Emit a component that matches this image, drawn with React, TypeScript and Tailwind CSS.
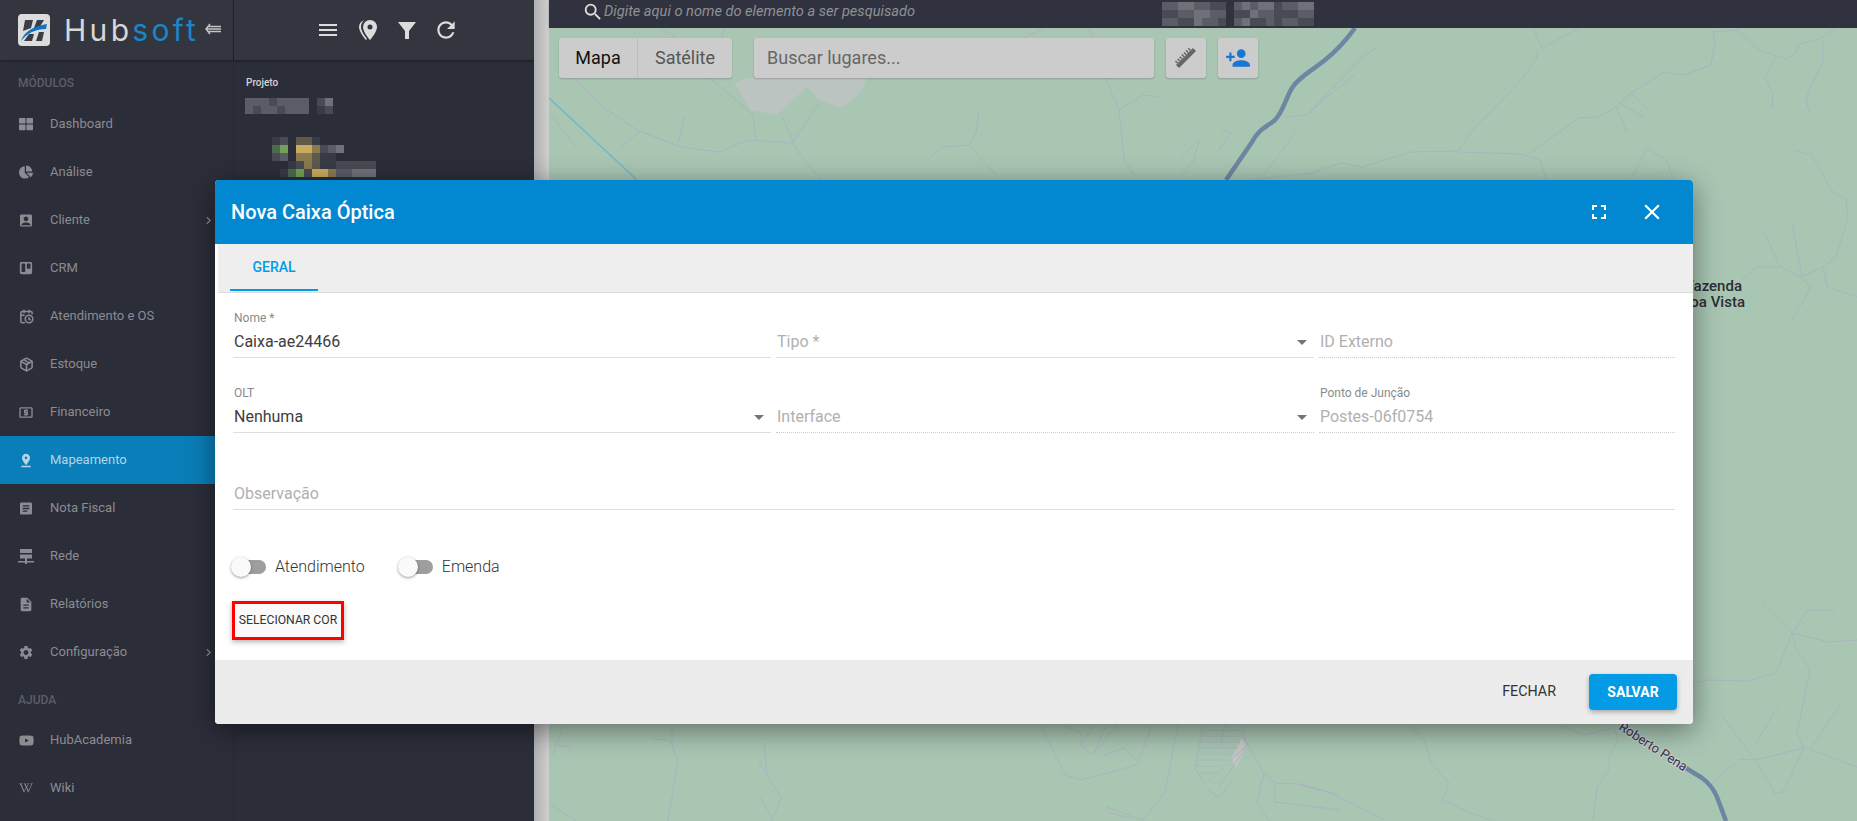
import type { ReactNode } from 'react';
import {
  FaChartPie,
  FaThLarge,
  FaTrello,
  FaWikipediaW,
  FaYoutube,
} from 'react-icons/fa';
import {
  MdAccountBox,
  MdArticle,
  MdChevronRight,
  MdClose,
  MdDescription,
  MdFullscreen,
  MdLocalAtm,
  MdPersonAdd,
  MdPinDrop,
  MdSearch,
  MdSettings,
} from 'react-icons/md';
import { CalendarClock, Package } from 'lucide-react';

const PALETTE: Record<string, string> = {
  '1': '#383a45',
  '2': '#484a54',
  '3': '#5a5c66',
  '4': '#6f7179',
  g: '#6fa254',
  d: '#4d6a50',
  y: '#c9ab5f',
  b: '#8a7a50',
  c: '#5e5a4c',
};

function Mosaic({ rows, cell = 8, className }: { rows: string[]; cell?: number; className?: string }) {
  return (
    <svg width={rows[0].length * cell} height={rows.length * cell} className={className}>
      {rows.map((row, y) =>
        row.split('').map((c, x) =>
          c === '.' ? null : (
            <rect key={`${x}-${y}`} x={x * cell} y={y * cell} width={cell} height={cell} fill={PALETTE[c]} />
          ),
        ),
      )}
    </svg>
  );
}

function RedeIcon() {
  return (
    <svg viewBox="0 0 16 16" className="h-4 w-4" fill="currentColor">
      <path d="M2 1h12v4H2zM2 6.5h12v4H2zM7 10.5h2V13h7v1.5H9V16H7v-1.5H0V13h7z" />
    </svg>
  );
}

const MODULES: { label: string; icon: ReactNode; arrow?: boolean; active?: boolean }[] = [
  { label: 'Dashboard', icon: <FaThLarge size={14} /> },
  { label: 'Análise', icon: <FaChartPie size={14} /> },
  { label: 'Cliente', icon: <MdAccountBox size={17} />, arrow: true },
  { label: 'CRM', icon: <FaTrello size={14} /> },
  { label: 'Atendimento e OS', icon: <CalendarClock size={15} strokeWidth={2.5} /> },
  { label: 'Estoque', icon: <Package size={15} strokeWidth={2.5} /> },
  { label: 'Financeiro', icon: <MdLocalAtm size={17} /> },
  { label: 'Mapeamento', icon: <MdPinDrop size={19} />, active: true },
  { label: 'Nota Fiscal', icon: <MdArticle size={19} /> },
  { label: 'Rede', icon: <RedeIcon /> },
  { label: 'Relatórios', icon: <MdDescription size={17} /> },
  { label: 'Configuração', icon: <MdSettings size={17} />, arrow: true },
];

const HELP = [
  { label: 'HubAcademia', icon: <FaYoutube size={15} /> },
  { label: 'Wiki', icon: <FaWikipediaW size={14} /> },
];

function NavItem({ label, icon, arrow, active }: { label: string; icon: ReactNode; arrow?: boolean; active?: boolean }) {
  return (
    <div
      className={`flex h-12 items-center pl-[18px] text-[13px] ${
        active ? 'bg-[#0a7eb8] text-[#b5d5e6]' : 'text-[#8b8c92]'
      }`}
    >
      <span className="flex w-4 justify-center">{icon}</span>
      <span className="ml-4 flex-1">{label}</span>
      {arrow && <MdChevronRight size={15} className="mr-[17px]" />}
    </div>
  );
}

function Sidebar() {
  return (
    <aside className="flex w-[234px] shrink-0 flex-col border-r border-[#272933] bg-[#2b2d39]">
      <div className="flex h-[60px] shrink-0 items-center bg-[#33363f] pl-[18px] shadow-[0_1px_2px_rgba(0,0,0,0.4)]">
        <svg viewBox="0 0 32 32" className="h-8 w-8 shrink-0">
          <rect width="32" height="32" rx="4" fill="#dcdcdc" />
          <path d="M7 6h8l-2 8-8 3zM19 6h7l-5 8h-5zM11 20h5l-2 7H6zM21 18h5l-2 9h-6z" fill="#3a3d45" />
          <path d="M3 27c3-9 12-15 26-17l-1 5C18 15 9 19 3 27z" fill="#1272c4" />
        </svg>
        <div className="ml-[14px] text-[30px] leading-none font-normal tracking-[0.11em] [font-family:Inter,sans-serif]">
          <span className="text-[#d7d7d7]">Hub</span>
          <span className="text-[#1a86c7]">soft</span>
        </div>
        <svg viewBox="0 0 16 12" className="absolute left-[205px] top-[23px] h-3 w-4" fill="none" stroke="#c4c4c4" strokeWidth="1.5">
          <path d="M5 1 1 6l4 5M3 3.5h13M2 6h14M3 8.5h13" />
        </svg>
      </div>
      <div className="flex h-10 items-center pt-[6px] pl-[18px] text-xs font-medium text-[#5b5d66]">MÓDULOS</div>
      {MODULES.map((m) => (
        <NavItem key={m.label} {...m} />
      ))}
      <div className="flex h-10 items-center pt-[8px] pl-[18px] text-xs font-medium text-[#5b5d66]">AJUDA</div>
      {HELP.map((m) => (
        <NavItem key={m.label} {...m} />
      ))}
    </aside>
  );
}

function ProjectPanel() {
  return (
    <section className="flex w-[300px] shrink-0 flex-col bg-[#2b2d39]">
      <div className="flex h-[60px] shrink-0 items-center bg-[#33363f] shadow-[0_1px_2px_rgba(0,0,0,0.4)]">
        <svg viewBox="0 0 24 24" className="ml-[82px] h-6 w-6" fill="#dcdcdc">
          <path d="M3 18h18v-2H3v2zm0-5h18v-2H3v2zm0-7v2h18V6H3z" />
        </svg>
        <svg viewBox="0 0 24 24" className="ml-[16px] h-6 w-6" fill="#dcdcdc">
          <path d="M14,11.5A2.5,2.5 0 0,0 16.5,9A2.5,2.5 0 0,0 14,6.5A2.5,2.5 0 0,0 11.5,9A2.5,2.5 0 0,0 14,11.5M14,2C17.86,2 21,5.13 21,9C21,14.25 14,22 14,22C14,22 7,14.25 7,9A7,7 0 0,1 14,2M5,9C5,13.5 10.08,19.66 11,20.81L10,22C10,22 3,14.25 3,9C3,5.83 5.11,3.15 8,2.29C6.16,3.94 5,6.33 5,9Z" />
        </svg>
        <svg viewBox="0 0 24 24" className="ml-[15px] h-6 w-6" fill="#dcdcdc">
          <path d="M3 4h18l-7 9v8h-4v-8z" />
        </svg>
        <svg viewBox="0 0 24 24" className="ml-[14px] h-[26px] w-[26px]" fill="#dcdcdc">
          <path d="M17.65 6.35C16.2 4.9 14.21 4 12 4c-4.42 0-7.99 3.58-7.99 8s3.57 8 7.99 8c3.73 0 6.84-2.55 7.73-6h-2.08c-.82 2.33-3.04 4-5.65 4-3.31 0-6-2.69-6-6s2.69-6 6-6c1.66 0 3.14.69 4.22 1.78L13 11h7V4l-2.35 2.35z" />
        </svg>
      </div>
      <div className="pt-4 pl-[12px]">
        <div className="text-[10px] leading-[14px] font-medium text-[#d4d4d6]">Projeto</div>
        <Mosaic className="mt-2 -ml-px" cell={8} rows={['33323333.24', '32332333.12']} />
        <Mosaic
          className="mt-[23px] ml-[18px]"
          rows={['.12.cc1.......', '.dg.yyb234....', '.23.bbc11.....', '...12bc1122222', '..1dg2yyb33444']}
        />
      </div>
    </section>
  );
}

const THIN_ROADS = [
  '1533,28 1542,48 1579,28',
  '1538,50 1536,60 1521,80 1490,113 1475,127 1459,150',
  '1459,152 1521,154 1540,160 1546,180',
  '1529,154 1579,118 1598,117 1616,107 1631,93 1664,72 1684,75 1711,65 1715,43 1713,32 1738,30 1759,50 1786,59 1796,53 1798,45 1821,38 1835,28',
  '1776,57 1765,77 1773,93 1772,108',
  '1823,40 1823,60 1806,98 1809,112',
  '1250,180 1312,173 1341,163 1362,167 1411,152 1459,151',
  '1616,107 1627,132',
  '1620,103 1645,118',
  '1631,93 1650,112',
  '1262,177 1296,132',
  '1285,117 1307,115 1327,97 1355,75',
  '1307,115 1362,57 1376,48',
  '1647,148 1631,180',
  '1647,148 1666,160 1674,180',
  '1794,150 1811,155 1819,167 1831,190 1846,200 1848,217 1836,257 1823,267 1800,277 1780,267 1757,267 1738,283',
  '1763,230 1780,267',
  '1792,223 1802,277',
  '1800,277 1811,287 1792,320',
  '1823,267 1827,287 1857,297',
  '1762,603 1792,633 1797,650 1810,670 1797,733 1804,747 1857,767',
  '1792,633 1808,610 1836,610',
  '1792,633 1829,642 1857,640',
  '1792,633 1776,673 1748,681 1708,680 1693,683',
  '1804,748 1755,760 1740,759 1712,783',
  '1755,760 1723,717',
  '1755,760 1772,787 1774,793 1783,792 1804,748',
  '1756,743 1778,707',
  '1811,748 1842,702',
  '1614,727 1618,740 1609,757 1609,770 1597,787 1593,820',
  '1558,725 1584,735 1613,728',
  '1410,725 1424,740 1431,763 1449,783 1442,800 1470,813 1492,820',
  '1300,785 1328,792 1371,813 1385,820',
  '574,78 603,107 637,130 681,147 719,152 748,140 792,143 804,160 821,180',
  '710,78 753,115 756,140',
  '819,103 792,143',
  '782,117 794,143',
  '1105,78 1119,110 1124,160 1136,177',
  '1119,110 1143,95 1158,97',
  '979,110 976,133 969,145 942,147 930,157',
  '969,145 998,177',
  '1180,157 1199,140 1194,160 1180,177',
  '639,132 620,148',
  '685,117 678,143',
  '550,113 576,147',
  '659,28 676,37',
  '724,28 722,37',
  '1044,28 1025,37',
  '1088,28 1093,37',
  '1221,130 1231,133 1219,150',
  '672,724 672,745 678,762 668,821',
  '653,739 668,740 672,745',
  '764,743 767,775 781,798 772,821',
  '760,797 772,818',
  '759,765 764,758',
  '759,765 767,774',
  '555,745 571,747 567,755',
  '563,725 553,755',
  '550,804 576,821',
  '1040,725 1065,775 1081,780 1111,772 1137,765 1152,725',
  '1060,724 1081,733 1081,745 1091,754 1099,748 1117,724',
  '1094,725 1081,745',
  '1106,725 1094,753',
  '1104,755 1124,748 1137,760',
  '1178,724 1165,792 1142,821',
  '1107,807 1142,820',
  '1107,807 1107,812 1130,818',
  '1203,725 1195,768 1205,785 1247,745 1242,725',
  '1201,730 1243,730',
  '1200,736 1241,736',
  '1199,742 1240,742',
  '1198,748 1238,748',
  '1197,754 1234,754',
  '1196,760 1228,760',
  '1195,766 1222,766',
  '1196,773 1217,773',
  '1226,724 1220,745',
  '1242,735 1264,773 1275,783 1300,784 1340,795',
  '1264,773 1257,803 1270,821',
  '1275,783 1275,802 1340,810',
  '1231,783 1219,798 1208,790',
  '1246,747 1219,787',
];

function MapDrawing() {
  return (
    <svg viewBox="549 28 1308 793" className="absolute inset-0 h-full w-full" fill="none">
      <path d="M734 83 745 78H867L860 93 841 108 819 100 807 87 777 115 750 110Z" fill="#bcc4c1" />
      <path d="M1242 738 1231 758 1236 767 1247 747Z" fill="#c3c7c6" />
      <polyline points="549,98 637,180" stroke="#72b6cb" strokeWidth="1.5" />
      {THIN_ROADS.map((points) => (
        <polyline key={points} points={points} stroke="#aab4bf" strokeWidth="1" />
      ))}
      <path
        d="M1355 28C1345 42 1335 52 1325 60C1310 72 1298 78 1292 88C1285 100 1283 112 1275 120C1265 128 1258 130 1252 142L1226 180"
        stroke="#6f86a3"
        strokeWidth="4.5"
      />
      <path d="M1678 763L1702 778Q1712 785 1717 797L1726 821" stroke="#6f86a3" strokeWidth="4.5" />
      <text
        x="1618"
        y="729"
        transform="rotate(33 1618 729)"
        fontSize="13"
        fontFamily="Roboto"
        fill="#32344a"
        stroke="#c8cfd2"
        strokeWidth="2"
        paintOrder="stroke"
      >
        Roberto Pena
      </text>
      <text fontSize="15" fontFamily="Roboto" fontWeight="500" fill="#2d2d35" textAnchor="end">
        <tspan x="1742" y="291">Fazenda</tspan>
        <tspan x="1745" y="307">Boa Vista</tspan>
      </text>
    </svg>
  );
}

function RulerIcon() {
  return (
    <svg viewBox="0 0 24 24" className="h-6 w-6" fill="none" stroke="#666">
      <path d="M3.5 20.5 20.5 3.5" strokeWidth="4.5" />
      <path d="M2 16.5 16.5 2" strokeWidth="3" strokeDasharray="1.5 1.5" />
    </svg>
  );
}

function MapArea() {
  return (
    <div className="flex min-w-0 flex-1">
      <div className="w-[15px] shrink-0 bg-gradient-to-r from-[#b0b0b0] to-[#cfcfcf]" />
      <main className="flex min-w-0 flex-1 flex-col">
        <div className="flex h-7 shrink-0 items-center bg-[#30333f] pl-[33px] shadow-[0_1px_2px_rgba(0,0,0,0.3)]">
          <MdSearch size={22} className="-mt-1 text-[#dcdcdc]" />
          <span className="-mt-1 text-[14.6px] text-[#8e9096] italic">Digite aqui o nome do elemento a ser pesquisado</span>
          <Mosaic className="ml-[247px]" cell={8} rows={['33443322.3434423344..', '22334433.2243322233..', '33224332.3422323322..']} />
        </div>
        <div className="relative flex-1 bg-[#a9c6b3]">
          <MapDrawing />
          <div className="relative flex items-start pt-[10px] pl-[10px]">
            <div className="flex h-10 w-[173px] rounded-[3px] bg-[#cccccc] text-lg shadow-[0_1px_2px_rgba(0,0,0,0.2)]">
              <div className="flex w-[79px] items-center justify-center border-r border-[#bdbdbd] text-[#111]">Mapa</div>
              <div className="flex flex-1 items-center justify-center text-[#555]">Satélite</div>
            </div>
            <div className="ml-[22px] flex h-10 w-[400px] items-center rounded-[3px] bg-[#cccccc] pl-[13px] text-lg text-[#666] shadow-[0_1px_2px_rgba(0,0,0,0.2)]">
              Buscar lugares...
            </div>
            <div className="ml-3 flex h-10 w-10 items-center justify-center rounded-[3px] bg-[#cccccc] shadow-[0_1px_2px_rgba(0,0,0,0.2)]">
              <RulerIcon />
            </div>
            <div className="ml-3 flex h-10 w-10 items-center justify-center rounded-[3px] bg-[#cccccc] text-[#1976d2] shadow-[0_1px_2px_rgba(0,0,0,0.2)]">
              <MdPersonAdd size={26} />
            </div>
          </div>
        </div>
      </main>
    </div>
  );
}

function Field({
  label,
  value,
  placeholder,
  select,
  dotted,
  className = '',
}: {
  label?: string;
  value?: string;
  placeholder?: string;
  select?: boolean;
  dotted?: boolean;
  className?: string;
}) {
  return (
    <div className={className}>
      <div className="h-4 pt-px pl-px text-xs leading-4 text-[#8a8a8a]">{label}</div>
      <div
        className={`flex h-[33px] items-center border-b pt-[2px] pr-[7px] pl-px text-base ${
          dotted ? 'border-dotted border-[#ccc]' : 'border-[#ddd]'
        }`}
      >
        <span className={`flex-1 ${value && !dotted ? 'text-[#3d3d3d]' : 'text-[#b0b0b0]'}`}>{value ?? placeholder}</span>
        {select && <span className="h-0 w-0 border-x-[5px] border-t-[5px] border-x-transparent border-t-[#757575]" />}
      </div>
    </div>
  );
}

function Toggle({ label }: { label: string }) {
  return (
    <div className="flex items-center">
      <div className="relative h-5 w-[35px]">
        <div className="absolute top-[3px] left-[6px] h-[14px] w-[29px] rounded-full bg-[#9e9e9e]" />
        <div className="absolute top-0 left-0 h-5 w-5 rounded-full bg-[#fafafa] shadow-[0_1px_3px_rgba(0,0,0,0.4)]" />
      </div>
      <span className="ml-[9px] text-base font-light text-[#333]">{label}</span>
    </div>
  );
}

function Modal() {
  return (
    <div className="absolute top-[180px] left-[215px] flex h-[544px] w-[1478px] flex-col rounded-[4px] bg-white shadow-[0_6px_28px_rgba(0,0,0,0.45)]">
      <div className="flex h-16 shrink-0 items-center rounded-t-[4px] bg-[#0288d1] pl-4 text-white">
        <h1 className="flex-1 text-xl font-medium">Nova Caixa Óptica</h1>
        <MdFullscreen size={24} className="mr-[28px]" />
        <MdClose size={26} className="mr-[28px]" />
      </div>
      <div className="ml-[3px] flex h-[49px] shrink-0 border-b border-[#ddd] bg-[#eeeeee]">
        <div className="ml-3 flex h-[47px] w-[88px] items-center justify-center border-b-2 border-[#039be5] text-sm font-medium text-[#039be5]">
          GERAL
        </div>
      </div>
      <div className="flex-1 pt-4 pr-[18px] pl-[18px]">
        <div className="grid grid-cols-[538px_538px_1fr] gap-x-[5px] gap-y-[26px]">
          <Field label="Nome *" value="Caixa-ae24466" />
          <Field placeholder="Tipo *" select />
          <Field placeholder="ID Externo" dotted />
          <Field label="OLT" value="Nenhuma" select />
          <Field placeholder="Interface" select dotted />
          <Field label="Ponto de Junção" value="Postes-06f0754" dotted />
          <Field placeholder="Observação" className="col-span-3 mt-[2px]" />
        </div>
        <div className="mt-[45px] -ml-[2px] flex gap-[33px]">
          <Toggle label="Atendimento" />
          <Toggle label="Emenda" />
        </div>
        <button className="mt-[22px] -ml-px flex h-[39px] w-[112px] items-center justify-center border-[3px] border-[#ff0000] bg-[#fafafa] text-[12.2px] text-[#333] shadow-[0_2px_5px_rgba(0,0,0,0.3)]">
          SELECIONAR COR
        </button>
      </div>
      <div className="flex h-16 shrink-0 items-center justify-end rounded-b-[4px] bg-[#ececec] pr-[16px]">
        <button className="text-[14.3px] text-[#333]">FECHAR</button>
        <button className="ml-[33px] h-9 w-[88px] rounded-[4px] bg-[#039be5] text-sm font-bold text-white shadow-[0_2px_5px_rgba(0,0,0,0.3)]">
          SALVAR
        </button>
      </div>
    </div>
  );
}

export default function App() {
  return (
    <div className="relative flex h-[821px] w-full overflow-hidden [font-family:Roboto,sans-serif]">
      <Sidebar />
      <ProjectPanel />
      <MapArea />
      <Modal />
    </div>
  );
}
